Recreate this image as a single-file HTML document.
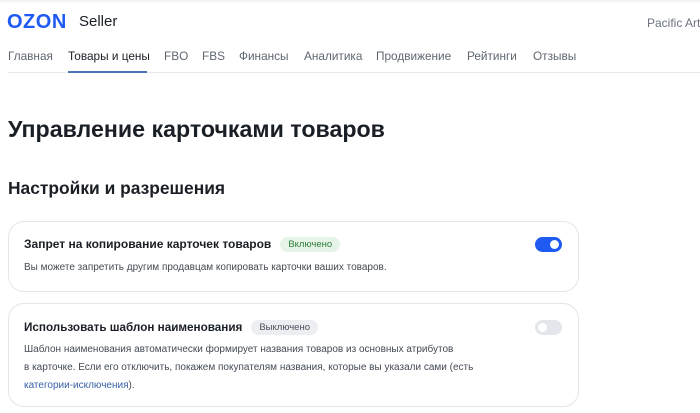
<!DOCTYPE html>
<html><head><meta charset="utf-8"><style>
*{margin:0;padding:0;box-sizing:border-box}
body{width:700px;height:413px;overflow:hidden;background:#fff;font-family:"Liberation Sans","Noto Sans CJK SC",sans-serif;color:#1a1f26;position:relative}
.a{position:absolute;white-space:nowrap}
.nav{top:49px;font-size:11.8px;color:#5f6670}
.card{position:absolute;left:8px;width:571px;border:1px solid #e3e6ea;border-radius:16px}
.badge{display:inline-block;font-size:9.5px;padding:2px 8px;border-radius:9px;vertical-align:1px;margin-left:9px;font-weight:normal}
</style></head><body>
<div style="position:absolute;top:0;left:0;width:700px;height:2px;background:#f3f4f6"></div>
<div class="a" style="left:7px;top:11px;font-size:20px;font-weight:900;color:#1f5bf3;letter-spacing:0.5px">OZON</div>
<div class="a" style="left:79px;top:13px;font-size:15px;color:#1a1f26">Seller</div>
<div class="a" style="left:647px;top:16px;font-size:12px;color:#6b7280">Pacific Arte</div>
<div class="a nav" style="left:8px">Главная</div>
<div class="a nav" style="left:68px;color:#1a1f26">Товары и цены</div>
<div class="a nav" style="left:164px">FBO</div>
<div class="a nav" style="left:202px">FBS</div>
<div class="a nav" style="left:239px">Финансы</div>
<div class="a nav" style="left:304px">Аналитика</div>
<div class="a nav" style="left:376px">Продвижение</div>
<div class="a nav" style="left:467px">Рейтинги</div>
<div class="a nav" style="left:533px">Отзывы</div>
<div style="position:absolute;left:8px;top:72px;width:692px;height:1px;background:#e8eaed"></div>
<div style="position:absolute;left:68px;top:71px;width:79px;height:2px;background:#4b73b8"></div>
<div class="a" style="left:8px;top:116px;font-size:23.2px;font-weight:bold;color:#1a1f26">Управление карточками товаров</div>
<div class="a" style="left:8px;top:178px;font-size:17.4px;font-weight:bold;color:#1a1f26">Настройки и разрешения</div>
<div class="card" style="top:221px;height:71px">
<div class="a" style="left:15px;top:15px;font-size:12px;font-weight:bold">Запрет на копирование карточек товаров<span class="badge" style="background:#e6f4e8;color:#2e7d3a">Включено</span></div>
<div class="a" style="left:15px;top:40px;font-size:10px;color:#444b55">Вы можете запретить другим продавцам копировать карточки ваших товаров.</div>
<div style="position:absolute;left:526px;top:15px;width:27px;height:15px;border-radius:8px;background:#1f5bf3"><div style="position:absolute;right:3px;top:3px;width:9px;height:9px;border-radius:50%;background:#fff"></div></div>
</div>
<div class="card" style="top:303px;height:104px">
<div class="a" style="left:15px;top:16px;font-size:11.7px;font-weight:bold">Использовать шаблон наименования<span class="badge" style="background:#eceef1;color:#4a515b">Выключено</span></div>
<div class="a" style="left:15px;top:37px;font-size:10px;color:#444b55;line-height:18px">Шаблон наименования автоматически формирует названия товаров из основных атрибутов<br>в карточке. Если его отключить, покажем покупателям названия, которые вы указали сами (есть<br><span style="color:#3a62a8">категории-исключения</span>).</div>
<div style="position:absolute;left:526px;top:16px;width:27px;height:15px;border-radius:8px;background:#e3e6ea"><div style="position:absolute;left:3px;top:3px;width:9px;height:9px;border-radius:50%;background:#fff"></div></div>
</div>
</body></html>
